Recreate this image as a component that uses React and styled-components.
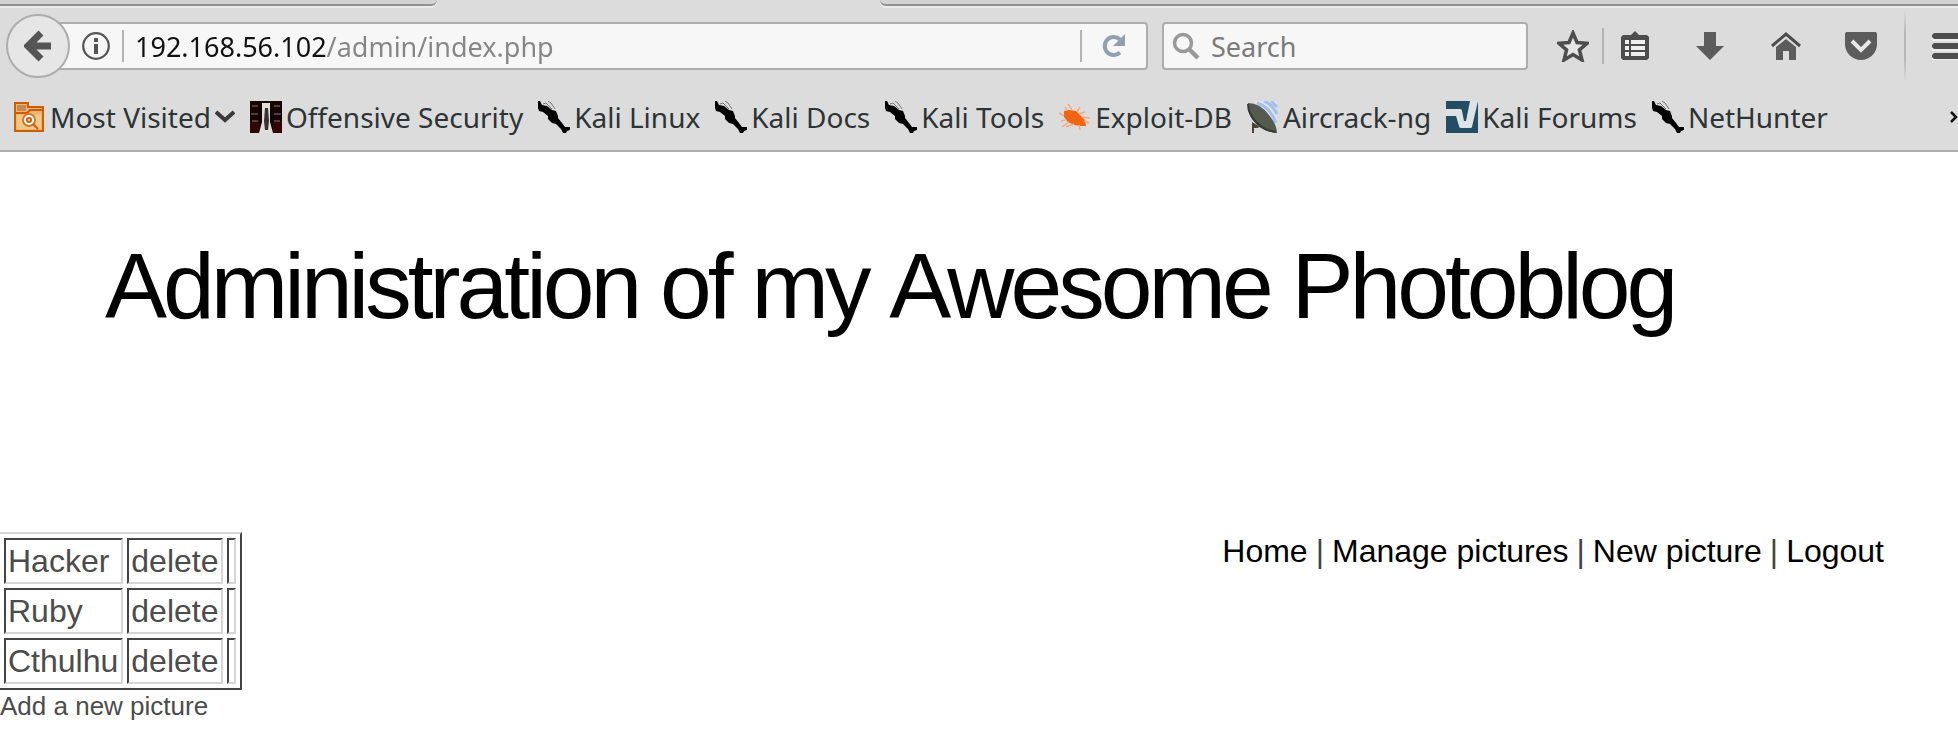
import React from "react";
import styled, { createGlobalStyle } from "styled-components";

const GlobalStyle = createGlobalStyle`
  *, *::before, *::after { box-sizing: border-box; }
  body { margin: 0; background: #fff; overflow-x: hidden; font-family: "Liberation Sans", Arial, sans-serif; }
  a { color: inherit; text-decoration: none; }
  svg { display: block; flex: none; }
`;

const chromeFont = `"Noto Sans", "Open Sans", sans-serif`;

const Chrome = styled.header`
  background: #dcdcdc;
  border-bottom: 2px solid #adadad;
  font-family: ${chromeFont};
  font-size: 28px;
  color: #2e3436;
`;

const TabStrip = styled.div`
  display: flex;
  height: 8px;
`;

const TabEdge = styled.div`
  flex: ${(p) => p.$grow};
  height: 6px;
  background: #d4d4d4;
  border-bottom: 2px solid #929292;
  box-shadow: 0 2px 0 #ebebeb;
  border-radius: ${(p) => p.$radius};
`;

const ActiveTab = styled.div`
  flex: 443;
`;

const Toolbar = styled.div`
  display: flex;
  align-items: center;
  height: 76px;
  padding-left: 6px;
`;

const IconButton = styled.button`
  display: flex;
  align-items: center;
  justify-content: ${(p) => p.$justify || "center"};
  flex: none;
  width: ${(p) => p.$width}px;
  height: 48px;
  padding: 0;
  border: 0;
  background: none;
  color: #4d4d4d;
`;

const BackButton = styled(IconButton)`
  width: 64px;
  height: 64px;
  border: 2px solid #adadad;
  border-radius: 50%;
  background: #e6e6e6;
  z-index: 1;
`;

const Field = styled.form`
  display: flex;
  align-items: center;
  min-width: 0;
  height: 48px;
  border: 2px solid #adadad;
  border-radius: 4px;
  background: #f7f7f7;
  font-size: 27px;
`;

const AddressField = styled(Field)`
  flex: 1;
  margin-left: -24px;
  padding-left: 34px;
`;

const SearchField = styled(Field)`
  flex: 0 1 366px;
  margin: 0 16px 0 14px;
  padding-left: 8px;
`;

const TextInput = styled.input`
  flex: 1;
  min-width: 0;
  height: 44px;
  padding: 0;
  border: 0;
  outline: 0;
  background: none;
  font: inherit;
  margin-left: 11px;
  color: #222;
  &::placeholder { color: #7b7b7b; opacity: 1; }
`;

const AddressInput = styled(TextInput)`
  color: transparent;
  background: linear-gradient(90deg, #111 191px, #868686 191px);
  background-clip: text;
`;

const Separator = styled.span`
  flex: none;
  width: 2px;
  height: ${(p) => p.$height || 32}px;
  background: #b4b4b4;
`;

const IdentitySeparator = styled(Separator)`
  margin-left: 12px;
`;

const MenuSeparator = styled(Separator)`
  background: linear-gradient(#dcdcdc, #b8b8b8 30%, #b8b8b8 70%, #dcdcdc);
`;

const Bookmarks = styled.nav`
  display: flex;
  align-items: center;
  gap: 15px;
  height: 66px;
  padding-left: 12px;
  white-space: nowrap;
`;

const Bookmark = styled.a`
  display: flex;
  align-items: center;
  gap: 4px;
`;

const Overflow = styled(IconButton)`
  width: 8px;
  margin-left: auto;
`;

const Title = styled.h1`
  margin: 0;
  padding: 80px 0 0 105px;
  font-size: 93px;
  line-height: 108px;
  font-weight: 400;
  font-kerning: none;
  letter-spacing: -4px;
  color: #000;
`;

const Main = styled.main`
  display: flex;
  justify-content: space-between;
  align-items: flex-start;
  padding-top: 192px;
`;

const Pictures = styled.table`
  border: 2px solid #444;
  border-top-color: #d6d6d6;
  border-left: 0;
  border-spacing: 4px;
  border-collapse: separate;
  font-size: 32px;
  line-height: 38px;
  color: #4c4c4c;
`;

const Cell = styled.td`
  padding: 2px 3px 2px 2px;
  border: 2px solid;
  border-color: #444 #d6d6d6 #d6d6d6 #444;
`;

const AddLink = styled.a`
  display: block;
  font-size: 26px;
  line-height: 32px;
  color: #4c4c4c;
`;

const Menu = styled.nav`
  display: flex;
  gap: 8px;
  padding-right: 74px;
  font-size: 32px;
  line-height: 38px;
  color: #444;
`;

const MenuLink = styled.a`
  color: #000;
`;

const BackIcon = () => (
  <svg width="28" height="32" viewBox="0 0 28 32"><path d="M17 3 4 16l13 13M5 16h22" fill="none" stroke="#555" strokeWidth="7" /></svg>
);
const InfoIcon = () => (
  <svg width="28" height="28" viewBox="0 0 28 28"><circle cx="14" cy="14" r="12.8" fill="none" stroke="#555" strokeWidth="2.2" /><path d="M12 6h4v4h-4zM12 12h4v10h-4z" fill="#555" /></svg>
);
const ReloadIcon = () => (
  <svg width="26" height="26" viewBox="0 0 26 26"><path d="M19 6.500A9 9 0 1 0 19 19.500" fill="none" stroke="#919fb0" strokeWidth="4" /><path d="M24 1v12H12z" fill="#919fb0" /></svg>
);
const SearchIcon = () => (
  <svg width="28" height="28" viewBox="0 0 28 28"><circle cx="11" cy="11" r="8.500" fill="none" stroke="#999" strokeWidth="3.500" /><path d="m17 17 9 9" stroke="#999" strokeWidth="4.500" /></svg>
);
const StarIcon = () => (
  <svg width="32" height="32" viewBox="0 0 32 32"><path d="m16 3 4 9.500 10 .8-7.600 6.500L25 30l-9-5.500L7 30l2.600-10.200L2 13.300l10-.8z" fill="#e6e6e6" stroke="#4d4d4d" strokeWidth="3.500" /></svg>
);
const ListIcon = () => (
  <svg width="28" height="32" viewBox="0 0 28 32"><path d="M2 5h8l4-4 4 4h8l2 2v21l-2 2H2l-2-2V7z" fill="#4d4d4d" /><path d="M4 10h4v4H4zm6 0h14v4H10zM4 16h4v4H4zm6 0h14v4H10zM4 22h4v4H4zm6 0h14v4H10z" fill="#eee" /></svg>
);
const DownIcon = () => (
  <svg width="28" height="30" viewBox="0 0 28 30"><path d="M8 1h12v14h8L14 29 0 15h8z" fill="#5c5c5c" /></svg>
);
const HomeIcon = () => (
  <svg width="32" height="30" viewBox="0 0 32 30"><path d="M2 15 16 3l14 12" fill="none" stroke="#4d4d4d" strokeWidth="3" /><path d="M6 16 16 8l10 8v13h-7v-9h-6v9H6z" fill="#5c5c5c" /><path d="M5 16 16 7l11 9" fill="none" stroke="#dcdcdc" strokeWidth="1" /></svg>
);
const PocketIcon = () => (
  <svg width="32" height="30" viewBox="0 0 32 30"><path d="M2 1h28q2 0 2 2v10a16 16 0 0 1-32 0V3q0-2 2-2z" fill="#5c5c5c" /><path d="m7 10 9 9 9-9" fill="none" stroke="#e8e8e8" strokeWidth="4" /></svg>
);
const MenuIcon = () => (
  <svg width="26" height="28" viewBox="0 0 26 28"><path d="M0 6h26M0 16h26M0 26h26" stroke="#eee" strokeWidth="6" /><path d="M2 1h24v6H2L0 5V3zM2 11h24v6H2l-2-2v-2zM2 21h24v6H2l-2-2v-2z" fill="#4d4d4d" /></svg>
);
const FolderIcon = () => (
  <svg width="34" height="32" viewBox="0 0 34 32"><path d="M3 30V2h13v4h15v24z" fill="#e8b878" stroke="#ce5c00" strokeWidth="2" /><path d="M5 4h9v6H5z" fill="#c88a4e" /><path d="M3 12h12l3-3h13" fill="none" stroke="#ce5c00" strokeWidth="2" /><path d="M5 14h24v14H5z" fill="#f0c88c" /><circle cx="17" cy="19" r="6" fill="#fff" stroke="#d9752a" strokeWidth="2" /><circle cx="17" cy="19" r="2" fill="none" stroke="#ce5c00" strokeWidth="2" /><path d="m21 23 5 5" stroke="#ce5c00" strokeWidth="2" /></svg>
);
const Chevron = () => (
  <svg width="20" height="14" viewBox="0 0 20 14"><path d="m1 2 9 8 9-8" fill="none" stroke="#3a3a3a" strokeWidth="4" /></svg>
);
const OffsecIcon = () => (
  <svg width="32" height="32" viewBox="0 0 32 32"><path d="M0 0h32v32H0z" fill="#160404" /><path d="M0 20h9v12H0zM23 20h9v12h-9z" fill="#330505" /><path d="M2 5h6M1 13h7M2 20h6M24 5h6M24 13h7M24 20h6" stroke="#4d4040" strokeWidth="2" /><path d="M12 2h8v19l3 11H9l3-11z" fill="#e4dedb" /><path d="M15 7h3l1 13-1 9h-3l-1-9z" fill="#333" /></svg>
);
const KaliIcon = () => (
  <svg width="32" height="32" viewBox="0 0 32 32"><path d="M0 0h2l2 4 5 1 5 4 4 1 2 5v2l4 5 3 4 5 0v3l-3 1-1 2h-3l-2-4-5-5-4-1-4-4v-3l-5-4-4-1-1-3z" fill="#000" /><path d="m5 3 3-1 6 6M10 0l3 2 4 6" fill="none" stroke="#777" strokeWidth="1" /></svg>
);
const ExploitIcon = () => (
  <svg width="32" height="32" viewBox="0 0 32 32"><path d="M5 10l5-1 7 1 6 6 3 3 1 6-5 0-7-1-6-3-4-5z" fill="#f26411" /><path d="M8 9 6 6M13 9 9 3M18 11l3-5M5 15l-5-3M6 19l-4 1M10 21 3 26M15 23l-8 3M20 24l1 5M23 16l8 1M25 20l5 2M20 13l6-2" stroke="#f0ab83" strokeWidth="1.500" /></svg>
);
const AircrackIcon = () => (
  <svg width="32" height="32" viewBox="0 0 32 32"><path d="M8 0h22v24z" fill="#dbe5f5" /><path d="M10 2q14 5 19 20M17 0q9 4 13 13M24 0l6 6" fill="none" stroke="#a5bfea" strokeWidth="3" /><path d="M1 2q12 0 21 12 8 10 8 18-12-1-20-8Q0 14 1 2z" fill="#555a4e" /><path d="m5 21 8 5-3 1H7v5H5z" fill="#4b4138" /><path d="M1 3q0 11 10 20 8 7 18 8" fill="none" stroke="#343a32" strokeWidth="2" /></svg>
);
const ForumsIcon = () => (
  <svg width="32" height="32" viewBox="0 0 32 32"><path d="M0 0h32v32H0z" fill="#234d63" /><path d="M0 8h14q2 0 2 2l2 10h2L24 0h8l-6 26q0 1-2 1h-9q-2 0-2-2l-3-10H0z" fill="#dce2e5" /></svg>
);

const bookmarks = [
  ["Most Visited", FolderIcon, true],
  ["Offensive Security", OffsecIcon],
  ["Kali Linux", KaliIcon],
  ["Kali Docs", KaliIcon],
  ["Kali Tools", KaliIcon],
  ["Exploit-DB", ExploitIcon],
  ["Aircrack-ng", AircrackIcon],
  ["Kali Forums", ForumsIcon],
  ["NetHunter", KaliIcon],
];

const pictures = ["Hacker", "Ruby", "Cthulhu"];
const sections = ["Home", "Manage pictures", "New picture", "Logout"];

export default function App() {
  return (
    <>
      <GlobalStyle />
      <Chrome>
        <TabStrip>
          <TabEdge $grow={437} $radius="0 0 10px 0" />
          <ActiveTab />
          <TabEdge $grow={1078} $radius="0 0 0 10px" />
        </TabStrip>
        <Toolbar>
          <BackButton aria-label="Back"><BackIcon /></BackButton>
          <AddressField>
            <InfoIcon />
            <IdentitySeparator />
            <AddressInput aria-label="Address" defaultValue="192.168.56.102/admin/index.php" />
            <Separator />
            <IconButton type="button" $width={64} aria-label="Reload"><ReloadIcon /></IconButton>
          </AddressField>
          <SearchField>
            <SearchIcon />
            <TextInput aria-label="Search" placeholder="Search" />
          </SearchField>
          <IconButton $width={58} aria-label="Bookmark this page"><StarIcon /></IconButton>
          <Separator $height={36} />
          <IconButton $width={62} aria-label="Show bookmarks"><ListIcon /></IconButton>
          <IconButton $width={88} aria-label="Downloads"><DownIcon /></IconButton>
          <IconButton $width={64} aria-label="Home"><HomeIcon /></IconButton>
          <IconButton $width={86} aria-label="Pocket"><PocketIcon /></IconButton>
          <MenuSeparator $height={72} />
          <IconButton $width={52} $justify="flex-end" aria-label="Open menu"><MenuIcon /></IconButton>
        </Toolbar>
        <Bookmarks aria-label="Bookmarks">
          {bookmarks.map(([name, Icon, folder]) => (
            <Bookmark href="#" key={name}>
              <Icon />
              {name}
              {folder && <Chevron />}
            </Bookmark>
          ))}
          <Overflow aria-label="More bookmarks">
            <svg width="8" height="12" viewBox="0 0 8 12"><path d="m1 1 5 5-5 5" fill="none" stroke="#111" strokeWidth="2.500" /></svg>
          </Overflow>
        </Bookmarks>
      </Chrome>
      <Title>Administration of my Awesome Photoblog</Title>
      <Main>
        <div>
          <Pictures>
            <tbody>
              {pictures.map((name) => (
                <tr key={name}>
                  <Cell>{name}</Cell>
                  <Cell><a href="#">delete</a></Cell>
                  <Cell />
                </tr>
              ))}
            </tbody>
          </Pictures>
          <AddLink href="#">Add a new picture</AddLink>
        </div>
        <Menu aria-label="Administration">
          {sections.map((name, i) => (
            <React.Fragment key={name}>
              {i > 0 && <span>|</span>}
              <MenuLink href="#">{name}</MenuLink>
            </React.Fragment>
          ))}
        </Menu>
      </Main>
    </>
  );
}
